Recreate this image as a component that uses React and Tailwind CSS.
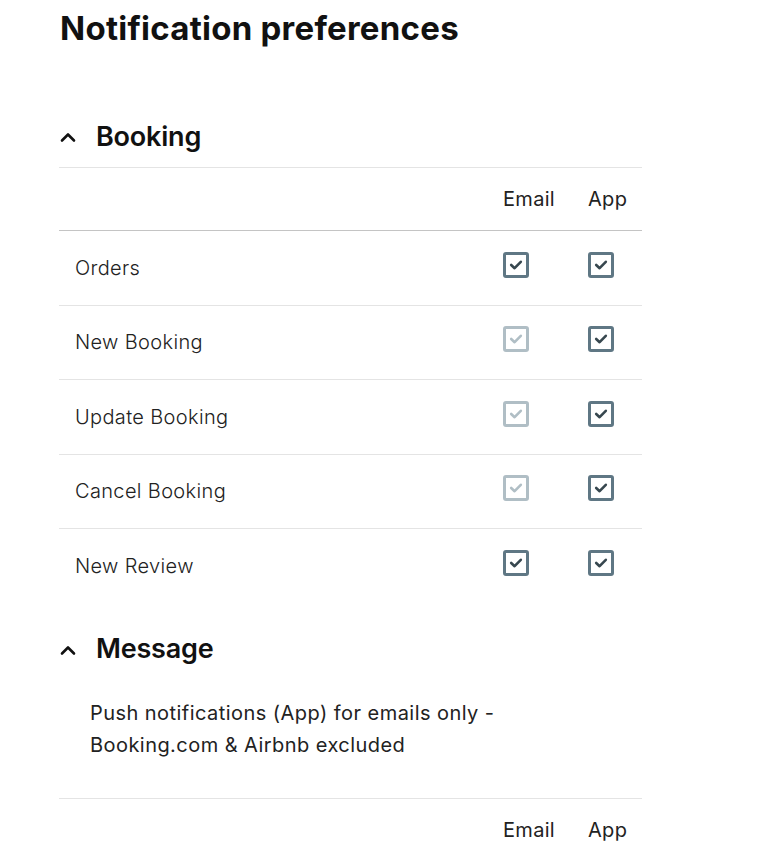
import React from "react";

const font = { fontFamily: "Inter, 'Noto Sans', sans-serif" };

function Chevron() {
  return (
    <svg width="18" height="18" viewBox="0 0 18 18" className="shrink-0 -ml-[1px]">
      <path d="M3 12.5 L9 6.5 L15 12.5" fill="none" stroke="#111" strokeWidth="2.6" strokeLinecap="round" strokeLinejoin="round" />
    </svg>
  );
}

function Check({ disabled }) {
  return (
    <span
      className={
        "mb-[6px] flex h-[26px] w-[26px] items-center justify-center rounded-[3px] border-[3px] " +
        (disabled ? "border-[#b0bec5]" : "border-[#5f7784]")
      }
    >
      <svg width="14" height="14" viewBox="0 0 14 14">
        <path
          d="M2.2 7 L5.6 10.2 L11.8 3.8"
          fill="none"
          stroke={disabled ? "#b0bec5" : "#37474f"}
          strokeWidth="2.6"
          strokeLinecap="round"
          strokeLinejoin="round"
        />
      </svg>
    </span>
  );
}

function SectionHeader({ title }) {
  return (
    <div className="flex items-center gap-[19px] pl-[60px] h-[40px]">
      <Chevron />
      <span className="text-[27px] font-semibold text-[#111] tracking-[-0.2px]">{title}</span>
    </div>
  );
}

function HeadCells() {
  return (
    <>
      <div className="flex-1" />
      <div className="w-[85px] text-[20px] text-[#222] tracking-[0.3px]">Email</div>
      <div className="w-[54px] text-[20px] text-[#222] tracking-[0.3px]">App</div>
    </>
  );
}

const rows = [
  ["Orders", false],
  ["New Booking", true],
  ["Update Booking", true],
  ["Cancel Booking", true],
  ["New Review", false],
];

export default function App() {
  return (
    <div className="w-[784px] h-[858px] bg-white overflow-hidden" style={font}>
      <h1 className="pl-[60px] pt-[8px] text-[33px] leading-[40px] font-bold text-[#111] tracking-[0.25px]">
        Notification preferences
      </h1>
      <div className="mt-[69px]">
        <SectionHeader title="Booking" />
      </div>
      <div className="ml-[59px] w-[583px] mt-[10px]">
        <div className="flex h-[64px] items-center border-t border-b-[1.5px] border-t-[#e4e4e4] border-b-[#c4c4c4]">
          <HeadCells />
        </div>
        {rows.map(([label, dis], i) => (
          <div
            key={label}
            className={
              "flex h-[74.5px] items-center " + (i < rows.length - 1 ? "border-b border-[#e4e4e4]" : "")
            }
          >
            <div className="flex-1 pl-4 text-[20px] text-[#222] font-light tracking-[0.35px]">{label}</div>
            <div className="w-[85px]">
              <Check disabled={dis} />
            </div>
            <div className="w-[54px]">
              <Check />
            </div>
          </div>
        ))}
      </div>
      <div className="mt-[26px]">
        <SectionHeader title="Message" />
      </div>
      <div className="pl-[90px] mt-[27px] text-[20px] leading-[32px] text-[#222] w-[560px] tracking-[0.45px]">
        Push notifications (App) for emails only -
        <br />
        Booking.com &amp; Airbnb excluded
      </div>
      <div className="ml-[59px] w-[583px] mt-[37px]">
        <div className="flex h-[64px] items-center border-t border-t-[#e4e4e4]">
          <HeadCells />
        </div>
      </div>
    </div>
  );
}
